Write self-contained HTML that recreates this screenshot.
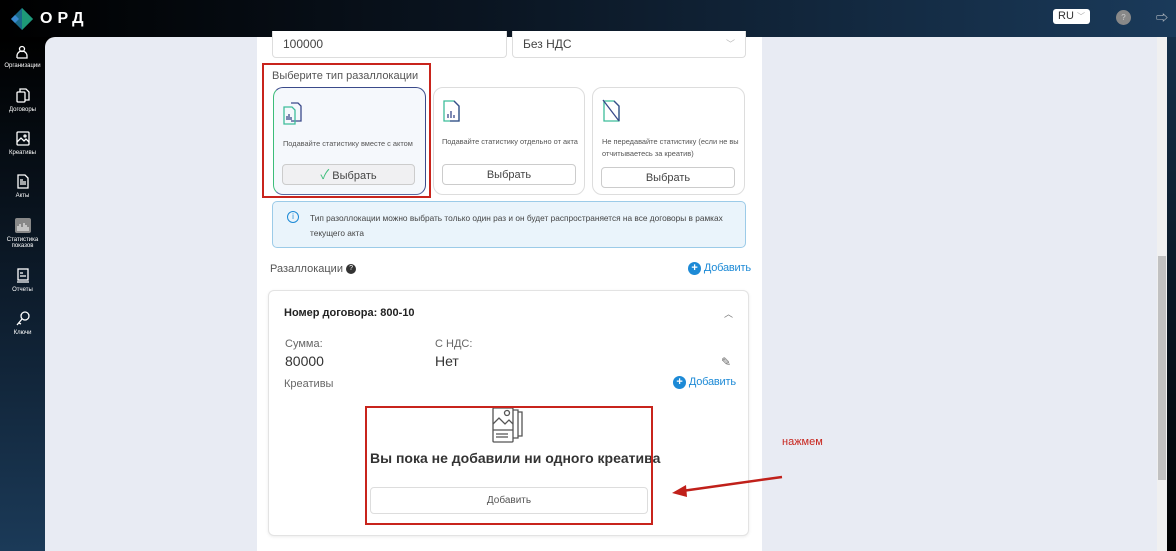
<!DOCTYPE html>
<html><head><meta charset="utf-8"><style>
*{box-sizing:border-box;margin:0;padding:0}
body{width:1176px;height:551px;overflow:hidden;font-family:"Liberation Sans","Noto Sans CJK JP",sans-serif;background:#000;position:relative;color:#333}
.top{position:absolute;left:0;top:0;width:1176px;height:37px;background:linear-gradient(90deg,#000 0%,#0a1420 40%,#1a3a5a 100%)}
.side{position:absolute;left:0;top:37px;width:45px;height:514px;background:linear-gradient(180deg,#000 0%,#0d1c2c 50%,#1b3a58 100%)}
.main{position:absolute;left:45px;top:37px;width:1122px;height:514px;background:#e8ebf3;border-top-left-radius:10px}
.rstrip{position:absolute;left:1167px;top:37px;width:9px;height:514px;background:linear-gradient(180deg,#15304a,#000)}
.sb{position:absolute;left:1157px;top:37px;width:10px;height:514px;background:#f0f0f0}
.thumb{position:absolute;left:1158px;top:256px;width:8px;height:224px;background:#c1c1c1}
.panel{position:absolute;left:257px;top:37px;width:505px;height:514px;background:#fff}
.nav{position:absolute;left:0;width:45px;text-align:center;color:#fff;font-size:6px}
.nav svg{display:block;margin:0 auto 4px}
.abs{position:absolute}
.inp{position:absolute;border:1px solid #ddd;border-radius:4px;background:#fff;font-size:12px;color:#444;padding:0 10px;line-height:26px}
.card{position:absolute;border:1px solid #ddd;border-radius:10px;background:#fff}
.btn{position:absolute;border:1px solid #ccc;border-radius:4px;background:#fff;font-size:11px;color:#444;text-align:center;line-height:20px}
.small{font-size:7.4px;color:#555;position:absolute;line-height:12px;white-space:nowrap}
.red{position:absolute;border:2px solid #c8241c}
</style></head><body>
<div class="top"></div>
<div class="abs" style="left:11px;top:8px;width:18px;height:18px;">
<svg width="22" height="22" viewBox="0 0 22 22"><polygon points="11,0 22,11 11,22 0,11" fill="#1a6a8a"/><polygon points="11,0 22,11 11,22" fill="#1e9a78"/><polygon points="4,7 8,11 4,15 0,11" fill="#3a8ad0"/></svg></div>
<div class="abs" style="left:40px;top:10px;color:#fff;font-size:16px;letter-spacing:5px;font-weight:bold">ОРД</div>
<div class="abs" style="left:1053px;top:9px;width:37px;height:15px;background:#fff;border-radius:3px;font-size:11px;color:#333;padding-left:5px;line-height:15px">RU <span style="color:#aaa;font-size:8px">﹀</span></div>
<div class="abs" style="left:1116px;top:10px;width:15px;height:15px;border-radius:50%;background:#888;color:#ccc;font-size:8px;text-align:center;line-height:15px">?</div>
<div class="abs" style="left:1156px;top:9px;color:#ddd;font-size:12px">⇨</div>
<div class="side"></div>
<div class="nav" style="top:45px"><svg width="14" height="14" viewBox="0 0 14 14" fill="none" stroke="#fff" stroke-width="1.3"><circle cx="6" cy="4" r="2.5"/><path d="M1 13v-2a4 4 0 0 1 10 0v2H1"/></svg>Организации</div>
<div class="nav" style="top:88px"><svg width="14" height="15" viewBox="0 0 14 15" fill="none" stroke="#fff" stroke-width="1.3"><rect x="1" y="4" width="8" height="10" rx="1"/><path d="M4 4V1h6l3 3v8h-4"/></svg>Договоры</div>
<div class="nav" style="top:131px"><svg width="14" height="15" viewBox="0 0 14 15" fill="none" stroke="#fff" stroke-width="1.3"><rect x="1" y="1" width="12" height="13" rx="1"/><path d="M1 11l4-4 3 3 2-2 3 3"/><circle cx="9" cy="5" r="1"/></svg>Креативы</div>
<div class="nav" style="top:174px"><svg width="14" height="15" viewBox="0 0 14 15" fill="none" stroke="#fff" stroke-width="1.3"><path d="M2 1h7l3 3v10H2z"/><path d="M4 8h6M4 10h6M4 6h3"/></svg>Акты</div>
<div class="nav" style="top:218px"><svg width="16" height="15" viewBox="0 0 16 15"><rect width="16" height="15" rx="2" fill="#888"/><path d="M3 8v5M5 6v7M7 9v4M9 5v8M11 7v6M13 9v4" stroke="#fff"/></svg>Статистика<br>показов</div>
<div class="nav" style="top:268px"><svg width="14" height="15" viewBox="0 0 14 15" fill="none" stroke="#fff" stroke-width="1.3"><rect x="2" y="1" width="10" height="11"/><path d="M1 14h12M4 5h3M4 8h6"/></svg>Отчеты</div>
<div class="nav" style="top:311px"><svg width="14" height="15" viewBox="0 0 14 15" fill="none" stroke="#fff" stroke-width="1.3"><circle cx="9" cy="5" r="4"/><path d="M6 8l-5 6M3 12l2 1"/></svg>Ключи</div>
<div class="main"></div>
<div class="sb"></div><div class="thumb"></div>
<div class="rstrip"></div>
<div class="panel"></div>
<div class="inp" style="left:272px;top:31px;width:235px;height:27px;border-top:none;border-radius:0 0 4px 4px">100000</div>
<div class="inp" style="left:512px;top:31px;width:234px;height:27px;border-top:none;border-radius:0 0 4px 4px">Без НДС<span style="float:right;color:#bbb;font-size:9px">﹀</span></div>
<div class="abs" style="left:272px;top:70px;font-size:11px;color:#555">Выберите тип разаллокации</div>
<div class="card" style="left:273px;top:87px;width:153px;height:108px;background:#f5f8fc;border:1.5px solid #3a4a8a;border-left-color:#3dbd7a;border-bottom-color:#5a6aa0"></div>
<svg class="abs" style="left:283px;top:99px" width="26" height="26" viewBox="0 0 26 26" fill="none" stroke-width="1.3"><path d="M8 4h7l3 3v15H8" stroke="#3a4a8a"/><path d="M1 8h8l3 3v14H1z" stroke="#3dbd9a"/><path d="M4 21v-4M6 21v-6M8 21v-3" stroke="#3a4a8a"/></svg>
<div class="small" style="left:283px;top:138px">Подавайте статистику вместе с актом</div>
<div class="btn" style="left:282px;top:164px;width:133px;height:21px;background:#f0f0f2"><span style="color:#3dbd7a;font-size:13px">✓</span> Выбрать</div>
<div class="card" style="left:433px;top:87px;width:152px;height:108px"></div>
<svg class="abs" style="left:442px;top:99px" width="20" height="26" viewBox="0 0 20 26" fill="none" stroke-width="1.3"><path d="M2 2h10l5 5v15H2z" stroke="#3dbd9a"/><path d="M12 2l5 5v15H8" stroke="#3a4a8a"/><path d="M6 19v-4M9 19v-7M12 19v-3" stroke="#3a4a8a"/></svg>
<div class="small" style="left:442px;top:136px">Подавайте статистику отдельно от акта</div>
<div class="btn" style="left:442px;top:164px;width:134px;height:21px">Выбрать</div>
<div class="card" style="left:592px;top:87px;width:153px;height:108px"></div>
<svg class="abs" style="left:602px;top:99px" width="20" height="26" viewBox="0 0 20 26" fill="none" stroke-width="1.3"><path d="M2 2h10l5 5v15H2z" stroke="#3dbd9a"/><path d="M1 1l16 21M12 2l5 5v15" stroke="#3a4a8a"/></svg>
<div class="small" style="left:602px;top:136px">Не передавайте статистику (если не вы<br>отчитываетесь за креатив)</div>
<div class="btn" style="left:601px;top:167px;width:134px;height:21px">Выбрать</div>
<div class="red" style="left:262px;top:63px;width:169px;height:135px"></div>
<div class="abs" style="left:272px;top:201px;width:474px;height:47px;background:#eaf4fb;border:1px solid #9ccbe8;border-radius:5px"></div>
<div class="abs" style="left:287px;top:211px;width:12px;height:12px;border:1.3px solid #1d8ad6;border-radius:50%;color:#1d8ad6;font-size:8px;text-align:center;line-height:10px">i</div>
<div class="small" style="left:310px;top:211px;color:#444;font-size:8.3px;line-height:15px">Тип разоллокации можно выбрать только один раз и он будет распространяется на все договоры в рамках<br>текущего акта</div>
<div class="abs" style="left:270px;top:263px;font-size:11px;color:#555">Разаллокации <span style="display:inline-block;width:10px;height:10px;border-radius:50%;background:#333;color:#fff;font-size:7px;text-align:center;line-height:10px;vertical-align:middle">?</span></div>
<div class="abs" style="left:688px;top:262px;font-size:11px;color:#1d8ad6;letter-spacing:-0.2px"><span style="display:inline-block;width:13px;height:13px;border-radius:50%;background:#1d8ad6;color:#fff;text-align:center;line-height:13px;font-weight:bold;font-size:11px">+</span> Добавить</div>
<div class="card" style="left:268px;top:290px;width:481px;height:246px;border-radius:6px;border-color:#e3e3e3;box-shadow:0 1px 3px rgba(0,0,0,.08)"></div>
<div class="abs" style="left:284px;top:307px;font-size:11px;font-weight:bold;color:#222">Номер договора: 800-10</div>
<div class="abs" style="left:724px;top:307px;font-size:9px;color:#777">︿</div>
<div class="abs" style="left:285px;top:338px;font-size:11px;color:#666">Сумма:</div>
<div class="abs" style="left:285px;top:353px;font-size:14px;color:#333">80000</div>
<div class="abs" style="left:435px;top:338px;font-size:11px;color:#666">С НДС:</div>
<div class="abs" style="left:435px;top:353px;font-size:14px;color:#333">Нет</div>
<div class="abs" style="left:721px;top:355px;font-size:12px;color:#666">✎</div>
<div class="abs" style="left:284px;top:378px;font-size:11px;color:#666">Креативы</div>
<div class="abs" style="left:673px;top:376px;font-size:11px;color:#1d8ad6;letter-spacing:-0.2px"><span style="display:inline-block;width:13px;height:13px;border-radius:50%;background:#1d8ad6;color:#fff;text-align:center;line-height:13px;font-weight:bold;font-size:11px">+</span> Добавить</div>
<svg class="abs" style="left:492px;top:407px" width="35" height="37" viewBox="0 0 35 37" fill="none" stroke="#555" stroke-width="1.3"><rect x="1" y="1" width="20" height="34" rx="1"/><path d="M21 3h5v28h-5M26 5h4v24h-4"/><path d="M1 17l6-6 6 6 4-4 4 4M1 23h20M4 27h12M4 30h12"/><circle cx="15" cy="6" r="2.5"/></svg>
<div class="abs" style="left:370px;top:450px;font-size:14px;font-weight:bold;color:#333">Вы пока не добавили ни одного креатива</div>
<div class="btn" style="left:370px;top:487px;width:278px;height:27px;line-height:26px;font-size:10px;color:#555;border-color:#ddd">Добавить</div>
<div class="red" style="left:365px;top:406px;width:288px;height:119px"></div>
<div class="abs" style="left:782px;top:436px;font-size:11px;color:#c8241c">нажмем</div>
<svg class="abs" style="left:660px;top:470px" width="130" height="30"><line x1="122" y1="7" x2="22" y2="21" stroke="#c0201a" stroke-width="2.5"/><polygon points="12,23 26,15 27,27" fill="#c0201a"/></svg>
</body></html>
